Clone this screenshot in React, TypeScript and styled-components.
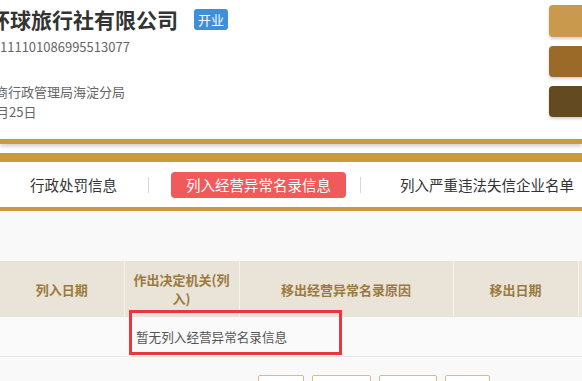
import React from "react";
import styled, { createGlobalStyle } from "styled-components";

const GlobalStyle = createGlobalStyle`
  html, body {
    margin: 0;
    padding: 0;
    overflow: hidden;
    background: #f9f9f9;
  }
  body {
    font-family: "Microsoft YaHei", "Noto Sans CJK SC", "Noto Sans", sans-serif;
  }
  * { box-sizing: border-box; }
`;

const GOLD = "#c99b41";

const Page = styled.div`
  width: 582px;
  height: 381px;
  overflow: hidden;
  position: relative;
  background: #f9f9f9;
`;

const Header = styled.header`
  height: 139px;
  background: #fff;
  display: flex;
  justify-content: space-between;
  align-items: flex-start;
`;

const Info = styled.div`
  display: flex;
  flex-direction: column;
  padding-top: 5px;
`;

const TitleRow = styled.div`
  display: flex;
  align-items: center;
  height: 28px;
  margin-left: -11px;
`;

const Title = styled.h1`
  margin: 0;
  font-size: 21px;
  line-height: 28px;
  font-weight: 700;
  color: #333;
`;

const Badge = styled.span`
  margin-left: 16px;
  width: 34px;
  height: 21px;
  border-radius: 3px;
  background: #3f8fd8;
  color: #fff;
  font-size: 13px;
  line-height: 21px;
  text-align: center;
`;

const InfoLine = styled.div<{ $shift?: number; $top?: number }>`
  font-size: 13px;
  line-height: 20px;
  color: #666;
  white-space: nowrap;
  margin-left: ${(p) => -(p.$shift ?? 0)}px;
  margin-top: ${(p) => p.$top ?? 0}px;
`;

const Actions = styled.div`
  display: flex;
  flex-direction: column;
  gap: 9px;
  padding-top: 5px;
  margin-right: -27px;
`;

const ActionBox = styled.div<{ $color: string; $h: number }>`
  width: 60px;
  height: ${(p) => p.$h}px;
  border-radius: 4px;
  background: ${(p) => p.$color};
  box-shadow: 0 2px 3px rgba(0, 0, 0, 0.18);
`;

const StripeZone = styled.div`
  background: #fff;
  display: flex;
  flex-direction: column;
`;

const ThinStripe = styled.div`
  height: 5px;
  background: ${GOLD};
  box-shadow: 0 2px 4px rgba(0, 0, 0, 0.22);
`;

const ThickStripe = styled.div`
  margin-top: 9px;
  height: 9px;
  background: ${GOLD};
`;

const TabBar = styled.nav`
  height: 49px;
  background: #fff;
  border-bottom: 4px solid ${GOLD};
  display: flex;
  align-items: center;
  padding-left: 13px;
  white-space: nowrap;
`;

const Tab = styled.div<{ $active?: boolean }>`
  flex: none;
  height: 26px;
  padding: 0 ${(p) => (p.$active ? 15 : 17)}px;
  border-radius: 4px;
  font-size: 14.5px;
  line-height: 26px;
  color: ${(p) => (p.$active ? "#fff" : "#333")};
  background: ${(p) => (p.$active ? "#f05a5b" : "transparent")};
`;

const Sep = styled.span`
  flex: none;
  width: 1px;
  height: 16px;
  background: #d8d8d8;
  margin: 0 22px 0 14px;
`;

const Content = styled.section`
  padding-top: 50px;
  position: relative;
`;

const Table = styled.table`
  width: 728px;
  table-layout: fixed;
  border-collapse: collapse;
`;

const Th = styled.th`
  height: 56px;
  padding: 0 6px;
  background: #e9e3d8;
  border-right: 1px solid #f6f2ec;
  color: #9b7a40;
  font-size: 13px;
  font-weight: 700;
  line-height: 19px;
  text-align: center;
`;

const Td = styled.td`
  height: 39px;
  padding: 0 12px;
  font-size: 12.6px;
  color: #555;
  text-align: left;
  background: #fafafa;
  border-bottom: 1px solid #e6e6e6;
  white-space: nowrap;
`;

const Highlight = styled.div`
  position: absolute;
  left: 129px;
  top: 99px;
  width: 213px;
  height: 45px;
  border: 3px solid #e8383d;
  pointer-events: none;
`;

const Pager = styled.div`
  display: flex;
  padding: 18px 0 0 258px;
  gap: 8px;
`;

const PageBtn = styled.div<{ $w: number }>`
  width: ${(p) => p.$w}px;
  height: 28px;
  border: 1px solid #d9bb88;
  border-radius: 2px;
  background: #fff;
`;

export default function App() {
  return (
    <>
      <GlobalStyle />
      <Page>
        <Header>
          <Info>
            <TitleRow>
              <Title>环球旅行社有限公司</Title>
              <Badge>开业</Badge>
            </TitleRow>
            <InfoLine $top={4}>111101086995513077</InfoLine>
            <InfoLine $top={25} $shift={5}>商行政管理局海淀分局</InfoLine>
            <InfoLine $shift={4}>月25日</InfoLine>
          </Info>
          <Actions>
            <ActionBox $color="#c99a4e" $h={32} />
            <ActionBox $color="#9b6a29" $h={31} />
            <ActionBox $color="#644a21" $h={31} />
          </Actions>
        </Header>
        <StripeZone>
          <ThinStripe />
          <ThickStripe />
        </StripeZone>
        <TabBar>
          <Tab>行政处罚信息</Tab>
          <Sep />
          <Tab $active>列入经营异常名录信息</Tab>
          <Sep />
          <Tab>列入严重违法失信企业名单（列入）信息</Tab>
        </TabBar>
        <Content>
          <Table>
            <colgroup>
              <col style={{ width: 124 }} />
              <col style={{ width: 115 }} />
              <col style={{ width: 214 }} />
              <col style={{ width: 125 }} />
              <col style={{ width: 150 }} />
            </colgroup>
            <thead>
              <tr>
                <Th>列入日期</Th>
                <Th>作出决定机关(列入)</Th>
                <Th>移出经营异常名录原因</Th>
                <Th>移出日期</Th>
                <Th>作出决定机关(移出)</Th>
              </tr>
            </thead>
            <tbody>
              <tr>
                <Td />
                <Td colSpan={4}>暂无列入经营异常名录信息</Td>
              </tr>
            </tbody>
          </Table>
          <Highlight />
          <Pager>
            <PageBtn $w={46} />
            <PageBtn $w={59} />
            <PageBtn $w={58} />
            <PageBtn $w={45} />
          </Pager>
        </Content>
      </Page>
    </>
  );
}
